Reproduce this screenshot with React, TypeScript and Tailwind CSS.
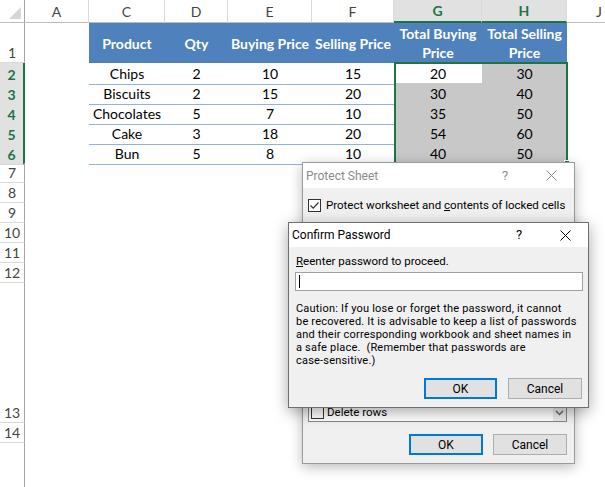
import React from 'react';

const GRID = 'grid grid-cols-[25px_64px_76px_63px_84px_82px_88px_85px_1fr]';

interface DataRow {
  n: number;
  product: string;
  qty: number;
  buy: number;
  sell: number;
  totalBuy: number;
  totalSell: number;
}

const data: DataRow[] = [
  { n: 2, product: 'Chips', qty: 2, buy: 10, sell: 15, totalBuy: 20, totalSell: 30 },
  { n: 3, product: 'Biscuits', qty: 2, buy: 15, sell: 20, totalBuy: 30, totalSell: 40 },
  { n: 4, product: 'Chocolates', qty: 5, buy: 7, sell: 10, totalBuy: 35, totalSell: 50 },
  { n: 5, product: 'Cake', qty: 3, buy: 18, sell: 20, totalBuy: 54, totalSell: 60 },
  { n: 6, product: 'Bun', qty: 5, buy: 8, sell: 10, totalBuy: 40, totalSell: 50 },
];

const emptyRows = [7, 8, 9, 10, 11, 12];

const cautionLines = [
  'Caution: If you lose or forget the password, it cannot',
  'be recovered. It is advisable to keep a list of passwords',
  'and their corresponding workbook and sheet names in',
  'a safe place.\u00a0 (Remember that passwords are',
  'case-sensitive.)',
];

const ColHead = ({ label, selected }: { label: string; selected?: boolean }) => (
  <div
    className={`flex items-center justify-center border-r border-r-[#dadada] ${
      selected
        ? 'bg-[#e1e1e1] border-b-2 border-b-[#217346] font-bold text-[#217346]'
        : 'border-b border-b-[#bdbdbd] text-[#444]'
    }`}
  >
    {label}
  </div>
);

const RowHead = ({ n, selected }: { n?: number; selected?: boolean }) => (
  <div
    className={`flex items-end justify-center border-b border-b-[#dadada] ${
      selected
        ? 'bg-[#e1e1e1] border-r-2 border-r-[#217346] font-bold text-[#217346]'
        : 'border-r border-r-[#a6a6a6] text-[#444]'
    }`}
  >
    <span className="leading-[19px]">{n}</span>
  </div>
);

const CloseIcon = ({ color }: { color: string }) => (
  <svg width="11" height="11" viewBox="0 0 11 11">
    <path d="M0.5 0.5 L10.5 10.5 M10.5 0.5 L0.5 10.5" stroke={color} strokeWidth="1" />
  </svg>
);

const CheckBox = ({ checked }: { checked?: boolean }) => (
  <svg width="13" height="13" viewBox="0 0 13 13" className="shrink-0">
    <rect x="0.5" y="0.5" width="12" height="12" fill="#fff" stroke="#333" />
    {checked && <path d="M2.5 6.5 L5.2 9.2 L10.5 3.5" fill="none" stroke="#333" strokeWidth="1.2" />}
  </svg>
);

const Button = ({ label, primary, className }: { label: string; primary?: boolean; className: string }) => (
  <div
    className={`flex h-[21px] items-center justify-center bg-[#e1e1e1] ${
      primary ? 'border-2 border-[#0078d7]' : 'border border-[#adadad]'
    } ${className}`}
  >
    {label}
  </div>
);

export default function App() {
  return (
    <div className="relative flex h-[487px] w-[605px] flex-col overflow-hidden bg-white font-['Lato'] text-[14px] text-black">
      {/* column headers */}
      <div className={`${GRID} h-[23px] shrink-0`}>
        <div className="flex items-end justify-end border-r border-r-[#a6a6a6] border-b border-b-[#bdbdbd] pr-[3px] pb-[3px]">
          <svg width="12" height="12" viewBox="0 0 12 12">
            <polygon points="12,0 12,12 0,12" fill="#d6d6d6" />
          </svg>
        </div>
        <ColHead label="A" />
        <ColHead label="C" />
        <ColHead label="D" />
        <ColHead label="E" />
        <ColHead label="F" />
        <ColHead label="G" selected />
        <ColHead label="H" selected />
        <div className="flex items-center border-b border-b-[#bdbdbd] pl-[29px] text-[#444]">J</div>
      </div>

      {/* row 1: table header */}
      <div className={`${GRID} h-[40px] shrink-0`}>
        <RowHead n={1} />
        <div />
        <div className="flex items-center justify-center bg-[#4f81bd] font-bold text-white">Product</div>
        <div className="flex items-center justify-center bg-[#4f81bd] font-bold text-white">Qty</div>
        <div className="flex items-center justify-center whitespace-nowrap bg-[#4f81bd] font-bold text-white">Buying Price</div>
        <div className="flex items-center justify-center whitespace-nowrap bg-[#4f81bd] font-bold text-white">Selling Price</div>
        <div className="flex flex-col items-center justify-center bg-[#4f81bd] font-bold leading-[19px] text-white">
          <span>Total Buying</span>
          <span>Price</span>
        </div>
        <div className="flex flex-col items-center justify-center bg-[#4f81bd] font-bold leading-[19px] text-white">
          <span>Total Selling</span>
          <span>Price</span>
        </div>
        <div />
      </div>

      {/* data rows */}
      {data.map((r) => (
        <div key={r.n} className={`${GRID} h-[20px] shrink-0`}>
          <RowHead n={r.n} selected />
          <div />
          <div className="flex items-center justify-center border-b border-b-[#95b3d7]">{r.product}</div>
          <div className="flex items-center justify-center border-b border-b-[#95b3d7]">{r.qty}</div>
          <div className="flex items-center justify-center border-b border-b-[#95b3d7]">{r.buy}</div>
          <div className="flex items-center justify-center border-b border-b-[#95b3d7]">{r.sell}</div>
          <div
            className={`flex items-center justify-center border-b border-b-[#9aa8b8] ${
              r.n === 2 ? 'bg-white' : 'bg-[#c8c8c8]'
            }`}
          >
            {r.totalBuy}
          </div>
          <div className="flex items-center justify-center border-b border-b-[#9aa8b8] bg-[#c8c8c8]">{r.totalSell}</div>
          <div />
        </div>
      ))}

      {emptyRows.map((n) => (
        <div key={n} className={`${GRID} h-[20px] shrink-0`}>
          <RowHead n={n} />
        </div>
      ))}

      <div className={`${GRID} h-[140px] shrink-0`}>
        <RowHead n={13} />
      </div>
      <div className={`${GRID} h-[20px] shrink-0`}>
        <RowHead n={14} />
      </div>
      <div className={`${GRID} flex-1`}>
        <div className="border-r border-r-[#a6a6a6]" />
      </div>

      {/* selection G2:H6 */}
      <div className="pointer-events-none absolute left-[394px] top-[62px] h-[102px] w-[174px] border-2 border-[#217346]">
        <div className="absolute -bottom-[4px] -right-[4px] h-[6px] w-[6px] border border-white bg-[#217346]" />
      </div>

      {/* Protect Sheet dialog (inactive, mostly covered) */}
      <div className="absolute left-[302px] top-[162px] flex h-[302px] w-[273px] flex-col border border-[#9a9a9a] bg-[#f0f0f0] font-['Roboto'] text-[11.5px] shadow-[0_3px_12px_rgba(0,0,0,0.28)]">
        <div className="flex h-[25px] shrink-0 items-center bg-white pl-[3px] text-[12px] text-[#8a8a8a]">
          <span className="flex-1">Protect Sheet</span>
          <span className="w-[46px] text-center text-[13px]">?</span>
          <span className="flex w-[46px] justify-center">
            <CloseIcon color="#8a8a8a" />
          </span>
        </div>
        <div className="flex flex-1 flex-col pl-[5px] pr-[7px] pb-[8px]">
          <div className="mt-[10px] flex items-center gap-[5px]">
            <CheckBox checked />
            <span className="whitespace-nowrap leading-[15px]">
              Protect worksheet and <span className="underline">c</span>ontents of locked cells
            </span>
          </div>
          <div className="mt-auto flex h-[130px] border border-[#828790] bg-white">
            <div className="flex flex-1 flex-col justify-end">
              <div className="flex h-[17px] items-center gap-[3px] pl-[2px]">
                <CheckBox />
                <span className="leading-[15px]">Delete rows</span>
              </div>
            </div>
            <div className="flex w-[13px] flex-col justify-end bg-[#e9e9e9] pb-[4px]">
              <svg width="13" height="8" viewBox="0 0 13 8">
                <path d="M3 2 L6.5 5.5 L10 2" fill="none" stroke="#606060" strokeWidth="1.3" />
              </svg>
            </div>
          </div>
          <div className="mt-[12px] flex justify-end gap-[10px] text-[12px]">
            <Button label="OK" primary className="w-[74px]" />
            <Button label="Cancel" className="w-[74px]" />
          </div>
        </div>
      </div>

      {/* Confirm Password dialog (active) */}
      <div className="absolute left-[288px] top-[222px] flex h-[186px] w-[301px] flex-col border border-[#6e6e6e] bg-[#f0f0f0] font-['Roboto'] text-[11.5px] shadow-[0_4px_14px_rgba(0,0,0,0.35)]">
        <div className="flex h-[24px] shrink-0 items-center bg-white pl-[3px] text-[12px] text-black">
          <span className="flex-1">Confirm Password</span>
          <span className="w-[46px] text-center text-[13px]">?</span>
          <span className="flex w-[46px] justify-center">
            <CloseIcon color="#000" />
          </span>
        </div>
        <div className="flex flex-1 flex-col pl-[6px] pr-[5px] pb-[8px]">
          <div className="mt-[7px] pl-[1px] leading-[15px]">
            <span className="underline">R</span>eenter password to proceed.
          </div>
          <div className="mt-[3px] flex h-[19px] items-center border border-[#a0a0a0] bg-white">
            <div className="ml-[3px] h-[13px] w-[1px] bg-black" />
          </div>
          <div className="mt-[11px] flex flex-col pl-[1px] text-[11px] tracking-[0.2px]">
            {cautionLines.map((line) => (
              <div key={line} className="h-[13px] whitespace-nowrap leading-[13px]">
                {line}
              </div>
            ))}
          </div>
          <div className="mt-auto flex justify-end gap-[11px] pr-[1px] text-[12px]">
            <Button label="OK" primary className="w-[73px]" />
            <Button label="Cancel" className="w-[74px]" />
          </div>
        </div>
      </div>
    </div>
  );
}
